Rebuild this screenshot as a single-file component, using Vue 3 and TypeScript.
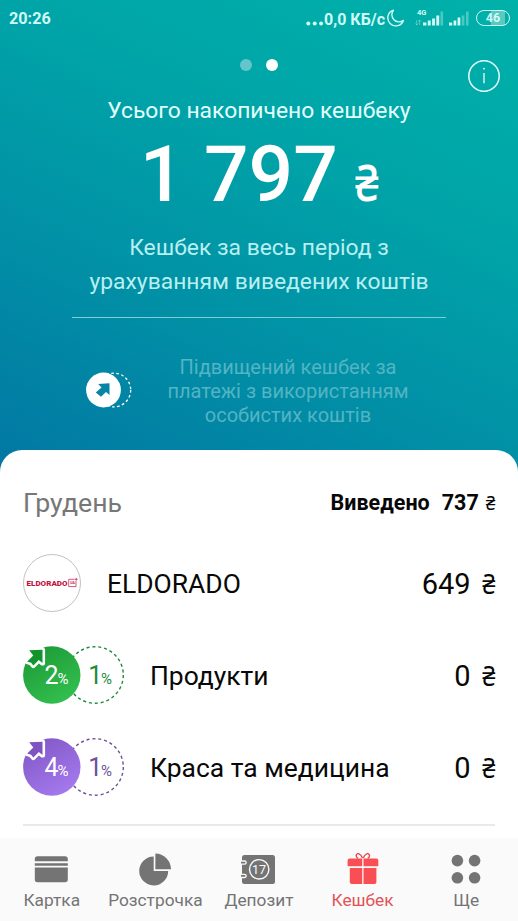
<script setup lang="ts">
interface CategoryRow {
  id: string
  name: string
  amount: string
  boosted: string
  from: string
  to: string
  arrow: string
  outline: string
}

const categories: CategoryRow[] = [
  { id: 'food', name: 'Продукти', amount: '0', boosted: '2', from: '#1c9a35', to: '#35c151', arrow: '#12942c', outline: '#1f8a3c' },
  { id: 'beauty', name: 'Краса та медицина', amount: '0', boosted: '4', from: '#8258c8', to: '#a57bee', arrow: '#7d54c0', outline: '#6d5299' },
]
</script>

<template>
  <div class="screen">
    <header class="hero">
      <div class="status">
        <span class="clock">20:26</span>
        <div class="status-right">
          <svg class="ellipsis" width="18" height="20" viewBox="0 0 18 20" fill="currentColor">
            <circle cx="2.3" cy="10.4" r="2" /><circle cx="8.7" cy="10.4" r="2" /><circle cx="15.1" cy="10.4" r="2" />
          </svg>
          <span class="speed">0,0 КБ/с</span>
          <svg class="moon" width="18" height="20" viewBox="0 0 18 20" fill="none" stroke="currentColor" stroke-width="1.4" stroke-linejoin="round">
            <path d="M6.4 1.2A8 8 0 1 0 16.4 11.4A7.2 7.2 0 0 1 6.4 1.2Z" />
          </svg>
          <svg class="signal-a" width="30" height="22" viewBox="0 0 30 22" fill="currentColor">
            <text x="2" y="6.2" class="net">4G</text>
            <path d="M1.7 11v5M.5 14.4l1.2 1.6L3 14.4M4.6 16v-5M3.4 12.6l1.2-1.6 1.2 1.6" fill="none" stroke="currentColor" stroke-width=".7" opacity=".5" />
            <path d="M8 13.5h3.4v3H8zM12.8 11.500h2.900v5h-2.900zM17.100 9.500h2.900v7h-2.900zM21.300 6.500h2.900v10h-2.900z" />
            <path d="M25.500 2.500h2.600v14h-2.600z" opacity=".35" />
          </svg>
          <svg class="signal-b" width="22" height="22" viewBox="0 0 22 22" fill="currentColor">
            <path d="M1 13.500h3.200v3H1zM5.600 11.500h2.700v5H5.600zM9.600 8.500h2.700v8H9.600z" />
            <path d="M13.700 6.500h2.700v10h-2.700zM18 2.500h2.600v14h-2.600z" opacity=".35" />
          </svg>
          <span class="battery">46</span>
        </div>
      </div>

      <div class="dots"><i class="dot"></i><i class="dot active"></i></div>
      <svg class="info" width="34" height="34" viewBox="0 0 34 34" fill="none" stroke="#e9ffff">
        <circle cx="17" cy="17" r="15.2" stroke-width="1.5" />
        <path d="M17 14v10.3" stroke-width="1.3" /><circle cx="17" cy="9.7" r=".9" fill="#e9ffff" stroke="none" />
      </svg>

      <h1 class="title">Усього накопичено кешбеку</h1>
      <div class="total"><span class="total-num">1 797</span><span class="total-cur">₴</span></div>
      <p class="subtitle">Кешбек за весь період з<br />урахуванням виведених коштів</p>
      <div class="rule"></div>

      <div class="promo">
        <svg width="48" height="38" viewBox="0 0 48 38">
          <circle cx="27.8" cy="19" r="16.9" fill="none" stroke="#fff" stroke-width="1.3" stroke-dasharray="2.7 2.4" />
          <circle cx="17.5" cy="19" r="17.4" fill="#fff" />
          <path d="M12.200 13L23.500 12.200V24L20 21L15 25.800L13.200 24.200L9.800 21.500L15.500 16.500Z" fill="#0785a5" />
        </svg>
        <p class="promo-text">Підвищений кешбек за<br />платежі з використанням<br />особистих коштів</p>
      </div>
    </header>

    <main class="sheet">
      <div class="month">
        <span class="month-name">Грудень</span>
        <span class="withdrawn"><span>Виведено</span><span class="withdrawn-num">737</span><span class="cur small">₴</span></span>
      </div>

      <div class="row">
        <svg class="logo" width="58" height="58" viewBox="0 0 58 58">
          <circle cx="29" cy="29" r="28.500" fill="#fff" stroke="#999" stroke-width=".6" />
          <text x="3.600" y="31.600" class="logo-text" textLength="41" lengthAdjust="spacingAndGlyphs">ELDORADO</text>
          <path d="M51.500 25.300H45.700V32.600H53V27M51.700 25.300h3M53.200 23.800v3" fill="none" stroke="#c4133f" stroke-width=".7" />
          <text x="47.200" y="30.200" class="logo-ua">UA</text>
        </svg>
        <span class="name shop">ELDORADO</span>
        <span class="amount">649<span class="cur">₴</span></span>
      </div>

      <div v-for="c in categories" :key="c.id" class="row">
        <svg class="badge" width="104" height="60" viewBox="0 0 104 60">
          <defs>
            <linearGradient :id="c.id" x1=".2" y1="0" x2=".8" y2="1">
              <stop offset="0" :stop-color="c.from" /><stop offset="1" :stop-color="c.to" />
            </linearGradient>
          </defs>
          <circle cx="72" cy="30" r="28.300" fill="none" :stroke="c.outline" stroke-width="1.400" stroke-dasharray="3.100 2.830" />
          <circle cx="28.800" cy="30" r="28.700" :fill="`url(#${c.id})`" />
          <path d="M6.200 5.200L19.500 4.800V18L15.800 15L10.300 20.400L8.200 17.800L4.200 16.600L10.300 10.500Z" fill="#fff" stroke="#fff" stroke-width="5.200" stroke-linejoin="round" />
          <path d="M6.200 5.200L19.500 4.800V18L15.800 15L10.300 20.400L8.200 17.800L4.200 16.600L10.300 10.500Z" :fill="c.arrow" />
          <text x="21.500" y="38.800" class="pct-num" fill="#fff">{{ c.boosted }}</text>
          <text x="34.500" y="38.800" class="pct-sign" fill="#fff">%</text>
          <text x="65.200" y="38.800" class="pct-num" :fill="c.outline">1</text>
          <text x="78" y="38.800" class="pct-sign" :fill="c.outline">%</text>
        </svg>
        <span class="name">{{ c.name }}</span>
        <span class="amount">{{ c.amount }}<span class="cur">₴</span></span>
      </div>
      <div class="divider"></div>
    </main>

    <nav class="tabs">
      <div class="tab">
        <svg width="36" height="34" viewBox="0 0 36 34" fill="#747474">
          <path d="M.8 8.200V6a2.800 2.800 0 0 1 2.800-2.800h27.400A2.800 2.800 0 0 1 33.800 6v2.200zM.8 10.300h33v2.400h-33zM.8 14.500h33v12a2.800 2.800 0 0 1-2.800 2.800H3.600a2.800 2.800 0 0 1-2.800-2.800z" />
        </svg>
        <span>Картка</span>
      </div>
      <div class="tab">
        <svg width="36" height="34" viewBox="0 0 36 34" fill="#747474">
          <path d="M16.700 3.400A14.500 14.500 0 1 0 31.200 18H16.700z" /><path d="M18.400.6A15.800 15.800 0 0 1 34 16.200H18.400z" />
        </svg>
        <span>Розстрочка</span>
      </div>
      <div class="tab">
        <svg width="36" height="34" viewBox="0 0 36 34">
          <rect x="1" y="2" width="33" height="29" rx="2.500" fill="#747474" />
          <g fill="#747474" stroke="#fafafa" stroke-width="1.300"><path d="M0 8h3.600a1.500 1.500 0 0 1 0 3.200H0M0 21.300h3.600a1.500 1.500 0 0 1 0 3.200H0" /></g>
          <circle cx="18.200" cy="16.300" r="9.700" fill="none" stroke="#fafafa" stroke-width="1.400" />
          <text x="18" y="20.600" text-anchor="middle" class="safe">17</text>
        </svg>
        <span>Депозит</span>
      </div>
      <div class="tab active-tab">
        <svg width="36" height="34" viewBox="0 0 36 34" fill="#fa4e55">
          <path d="M4.600 5.400h12.600v7.900H2.600V7.400a2 2 0 0 1 2-2zM18.500 5.400h12.800a2 2 0 0 1 2 2v5.900H18.500zM4.800 15h12.400v16H6.800a2 2 0 0 1-2-2zM18.500 15h12.900v14a2 2 0 0 1-2 2H18.500z" />
          <path d="M17.400 5C15.800.3 11.900-.4 11.300 2c-.4 1.700.5 2.600 1.700 3.400M18.300 5C19.900.3 23.800-.4 24.400 2c.4 1.700-.5 2.600-1.700 3.400" fill="none" stroke="#e5484e" stroke-width="1.400" />
        </svg>
        <span>Кешбек</span>
      </div>
      <div class="tab">
        <svg width="36" height="34" viewBox="0 0 36 34" fill="#747474">
          <circle cx="9.400" cy="7.600" r="5.800" /><circle cx="26.600" cy="7.600" r="5.800" /><circle cx="9.400" cy="24.800" r="5.800" /><circle cx="26.600" cy="24.800" r="5.800" />
        </svg>
        <span>Ще</span>
      </div>
    </nav>
  </div>
</template>

<style>
body { margin: 0; }
</style>

<style scoped>
.screen { width: 518px; height: 921px; overflow: hidden; display: flex; flex-direction: column; font-family: Roboto, "Noto Sans", sans-serif; background: #fff; }
.hero { position: relative; box-sizing: border-box; height: 474px; flex: none; display: flex; flex-direction: column; background: linear-gradient(205deg, #00b1a9 0%, #00a5a8 32%, #0190a6 65%, #0277a3 100%); color: #e3ffff; }
.status { height: 37px; flex: none; box-sizing: border-box; padding: 0 8px 0 9px; display: flex; align-items: center; justify-content: space-between; color: #d0fbf7; }
.clock { font-size: 16.2px; font-weight: 700; line-height: 37px; }
.status-right { display: flex; align-items: center; }
.ellipsis { margin: 8px 0 0; }
.speed { font-size: 16px; font-weight: 700; line-height: 37px; padding-top: 1px; white-space: nowrap; }
.moon { margin-left: 2px; }
.signal-a { margin: 2px 0 0 10px; }
.signal-b { margin: 2px 0 0 3px; }
.net { font: 700 7.5px Roboto, sans-serif; }
.battery { box-sizing: border-box; width: 34px; height: 16px; margin: -1px 0 0 6px; border: 1.5px solid currentColor; border-radius: 8px; font-size: 12.5px; font-weight: 700; line-height: 14px; text-align: center; background: linear-gradient(90deg, transparent 45%, #5ac9c0 45% 86%, transparent 86%); }
.dots { height: 56px; flex: none; display: flex; align-items: center; justify-content: center; gap: 14px; }
.dot { width: 12px; height: 12px; border-radius: 50%; background: #64c6cc; }
.dot.active { background: #fff; }
.info { position: absolute; left: 467px; top: 59px; }
.title { margin: 0; padding-top: 1px; font-size: 22.85px; font-weight: 400; line-height: 34px; text-align: center; white-space: nowrap; }
.total { height: 93px; display: flex; justify-content: center; align-items: baseline; color: #fff; line-height: 93px; }
.total-num { font-size: 78.5px; font-weight: 500; }
.total-cur { margin: 0 -5px 0 17px; font: 500 51px/1 "Noto Sans", sans-serif; transform: scaleX(.83); transform-origin: left; }
.subtitle { margin: 10px 0 0; font-size: 22.85px; line-height: 34px; text-align: center; color: #b8eff1; white-space: nowrap; }
.rule { width: 374px; height: 1px; margin: 18px auto 0 72px; background: #80cdd5; flex: none; }
.promo { display: flex; align-items: center; margin: 37px 0 0 86px; height: 72px; }
.promo svg { flex: none; margin-bottom: 2px; }
.promo-text { margin: 0 0 0 33px; width: 242px; font-size: 20px; line-height: 24px; text-align: center; white-space: nowrap; color: #53b4c4; }
.sheet { position: relative; flex: none; box-sizing: border-box; height: 388px; margin-top: -24px; padding: 0 23px; border-radius: 22px 22px 0 0; background: #fff; color: #080808; display: flex; flex-direction: column; }
.month { height: 87px; padding-top: 18px; box-sizing: border-box; display: flex; justify-content: space-between; align-items: flex-start; line-height: 70px; }
.month-name { font-size: 26.7px; color: #777; }
.withdrawn { font-size: 21.5px; font-weight: 700; display: flex; align-items: baseline; }
.withdrawn-num { margin-left: 12px; }
.cur { margin-left: 9px; font: 400 28px/1 "Noto Sans", sans-serif; transform: scaleX(.85); transform-origin: right; }
.cur.small { font-size: 20.5px; margin-left: 5px; }
.row { height: 92px; flex: none; display: flex; align-items: center; }
.name { font-size: 26.45px; margin-left: 23px; line-height: 40px; padding-top: 1px; white-space: nowrap; }
.name.shop { margin-left: 26px; }
.amount { margin-left: auto; font-size: 29px; line-height: 40px; padding-top: 2px; display: flex; align-items: baseline; }
.logo { flex: none; }
.logo-text { font: 900 7.5px Roboto, sans-serif; fill: #c4133f; }
.logo-ua { font: 700 3.5px Roboto, sans-serif; fill: #c4133f; }
.badge { flex: none; }
.pct-num { font: 400 25px Roboto, sans-serif; }
.pct-sign { font: 400 15px Roboto, sans-serif; }
.divider { height: 2px; flex: none; background: #e9e9e9; margin-top: 11px; }
.tabs { height: 83px; flex: none; background: #fafafa; display: grid; grid-template-columns: repeat(5, 1fr); }
.tab { display: flex; flex-direction: column; align-items: center; padding-top: 15px; font-size: 17.3px; line-height: 24px; color: #747474; white-space: nowrap; }
.tab svg { margin-bottom: 1px; }
.active-tab { color: #e25258; }
.safe { font: 400 12.5px Roboto, sans-serif; fill: #fafafa; }
</style>
